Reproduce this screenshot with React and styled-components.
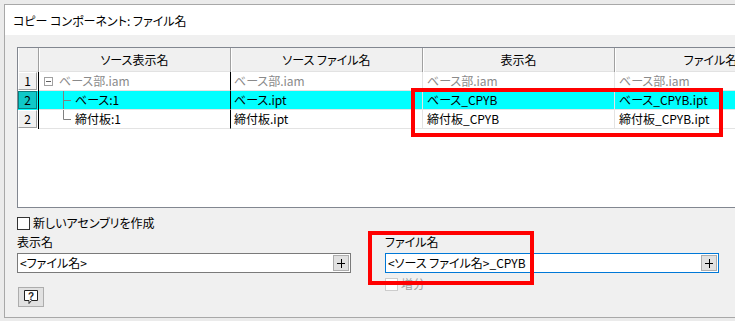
import React from 'react';
import styled, { createGlobalStyle, css } from 'styled-components';

const GlobalStyle = createGlobalStyle`
  html, body { margin: 0; padding: 0; background: #ebebeb; overflow: hidden; }
  body {
    font-family: "Noto Sans CJK JP", "Liberation Sans", sans-serif;
    font-size: 12px;
    color: #000;
    font-feature-settings: "palt";
  }
`;

const Screen = styled.div`
  position: relative;
  width: 735px;
  height: 321px;
  overflow: hidden;
`;

const Dialog = styled.div`
  margin: 4px 0 0 4px;
  width: 820px;
  height: 312px;
  border: 1px solid #a8a8a8;
  border-right: none;
  background: #f0f0f0;
  display: flex;
  flex-direction: column;
`;

const TitleBar = styled.div`
  height: 30px;
  line-height: 31px;
  padding-left: 8px;
  background: #fff;
  font-size: 12px;
`;

const Body = styled.div`
  padding: 12px 0 0 12px;
  display: flex;
  flex-direction: column;
`;

const GridPanel = styled.div`
  width: 800px;
  height: 159px;
  border: 1px solid #828790;
  background: #fff;
`;

const GridRow = styled.div`
  display: grid;
  grid-template-columns: 21px 192px 192px 192px 192px;
  height: ${p => (p.$header ? 24 : 19)}px;
  background: ${p => (p.$selected ? '#00ffff' : 'transparent')};
`;

const HeadCell = styled.div`
  background: #f0f0f0;
  border-right: 1px solid #a0a0a0;
  box-shadow: inset 1px 0 0 #fff, inset 0 -1px 0 #e2e2e2;
  display: flex;
  align-items: center;
  justify-content: center;
  line-height: 24px;
  white-space: nowrap;
  overflow: hidden;
`;

const RowHead = styled.div`
  border-right: 1px solid #000;
  padding: 0 1px 1px 0;
  display: flex;
`;

const RowHeadButton = styled.div`
  flex: 1;
  display: flex;
  align-items: center;
  justify-content: center;
  line-height: 16px;
  ${p =>
    p.$selected
      ? css`
          background: #10c8c8;
          border: 1px solid #0a7d7d;
        `
      : css`
          background: #f0f0f0;
          border: 1px solid;
          border-color: #fff #a0a0a0 #a0a0a0 #fff;
        `}
`;

const Cell = styled.div`
  border-right: 1px solid ${p => (p.$dark ? '#000' : '#e3e3e3')};
  border-bottom: 1px solid #e3e3e3;
  padding-left: ${p => p.$pad || 4}px;
  display: flex;
  align-items: center;
  line-height: 18px;
  white-space: nowrap;
  overflow: hidden;
  color: ${p => (p.$muted ? '#8a8a8a' : '#000')};
`;

const Connector = styled.svg`
  flex: none;
  margin-right: 2px;
`;

const CollapseBox = styled.span`
  width: 7px;
  height: 7px;
  border: 1px solid #a0a0a0;
  position: relative;
  margin-right: 6px;
  flex: none;
  &::after {
    content: '';
    position: absolute;
    left: 1px;
    right: 1px;
    top: 3px;
    height: 1px;
    background: #606060;
  }
`;

const CheckRow = styled.label`
  margin-top: 8px;
  display: flex;
  align-items: center;
  gap: 3px;
  height: 14px;
  line-height: 14px;
  color: ${p => (p.$disabled ? '#a0a0a0' : '#000')};
`;

const Box = styled.span`
  width: 11px;
  height: 11px;
  border: 1px solid ${p => (p.$disabled ? '#cccccc' : '#333')};
  background: #fff;
`;

const Fields = styled.div`
  display: grid;
  grid-template-columns: 334px 334px;
  column-gap: 34px;
  margin-top: 5px;
`;

const Field = styled.div`
  display: flex;
  flex-direction: column;
  align-items: flex-start;
`;

const Label = styled.div`
  line-height: 14px;
  height: 14px;
  margin-bottom: 4px;
`;

const InputBox = styled.div`
  width: 100%;
  box-sizing: border-box;
  height: 20px;
  border: 1px solid ${p => (p.$focused ? '#0078d7' : '#7a7a7a')};
  background: #fff;
  display: flex;
  align-items: center;
  padding: 0 1px 0 2px;
`;

const InputText = styled.span`
  flex: 1;
  line-height: 18px;
  white-space: nowrap;
`;

const PlusButton = styled.div`
  width: 14px;
  height: 14px;
  border: 1px solid #adadad;
  background: #e1e1e1;
  position: relative;
  &::before,
  &::after {
    content: '';
    position: absolute;
    background: #000;
  }
  &::before {
    left: 3px;
    right: 3px;
    top: 7px;
    height: 1px;
  }
  &::after {
    top: 3px;
    bottom: 2px;
    left: 7px;
    width: 1px;
  }
`;

const HelpButton = styled.div`
  margin: 14px 0 0 1px;
  width: 24px;
  height: 18px;
  border: 1px solid #adadad;
  background: #e1e1e1;
  display: flex;
  align-items: center;
  justify-content: center;
`;

const RedBox = styled.div`
  position: absolute;
  box-sizing: border-box;
  border: 4px solid #ff0000;
`;

const TreeLine = ({ last }) => (
  <Connector width="10" height="18" viewBox="0 0 10 18">
    <line x1="0.5" y1="0" x2="0.5" y2={last ? 9.5 : 18} stroke="#808080" />
    <line x1="0.5" y1="9.5" x2="8" y2="9.5" stroke="#808080" />
  </Connector>
);

const HelpIcon = () => (
  <svg width="16" height="16" viewBox="0 0 16 16">
    <path d="M1.5 1.5h13v10h-6l-2.5 3v-3h-4.5z" fill="#fff" stroke="#222" />
    <text x="8" y="10.5" textAnchor="middle" fontSize="10" fontWeight="bold" fontFamily="Liberation Sans, sans-serif" fill="#222">?</text>
  </svg>
);

const rows = [
  { n: '1', tree: 'root', name: 'ベース部.iam', file: 'ベース部.iam', disp: 'ベース部.iam', out: 'ベース部.iam', muted: true },
  { n: '2', tree: 'mid', name: 'ベース:1', file: 'ベース.ipt', disp: 'ベース_CPYB', out: 'ベース_CPYB.ipt', selected: true },
  { n: '2', tree: 'last', name: '締付板:1', file: '締付板.ipt', disp: '締付板_CPYB', out: '締付板_CPYB.ipt' },
];

export default function App() {
  return (
    <Screen>
      <GlobalStyle />
      <Dialog>
        <TitleBar>コピー コンポーネント: ファイル名</TitleBar>
        <Body>
          <GridPanel>
            <GridRow $header>
              <HeadCell />
              <HeadCell>ソース表示名</HeadCell>
              <HeadCell>ソース ファイル名</HeadCell>
              <HeadCell>表示名</HeadCell>
              <HeadCell>ファイル名</HeadCell>
            </GridRow>
            {rows.map((r, i) => (
              <GridRow key={i} $selected={r.selected}>
                <RowHead>
                  <RowHeadButton $selected={r.selected}>{r.n}</RowHeadButton>
                </RowHead>
                <Cell $dark $muted={r.muted} $pad={r.tree === 'root' ? 5 : 24}>
                  {r.tree === 'root' ? <CollapseBox /> : <TreeLine last={r.tree === 'last'} />}
                  {r.name}
                </Cell>
                <Cell $muted={r.muted} $pad={3}>{r.file}</Cell>
                <Cell $muted={r.muted} $pad={4}>{r.disp}</Cell>
                <Cell $muted={r.muted} $pad={4}>{r.out}</Cell>
              </GridRow>
            ))}
          </GridPanel>

          <CheckRow>
            <Box />
            新しいアセンブリを作成
          </CheckRow>

          <Fields>
            <Field>
              <Label>表示名</Label>
              <InputBox>
                <InputText>&lt;ファイル名&gt;</InputText>
                <PlusButton />
              </InputBox>
              <HelpButton>
                <HelpIcon />
              </HelpButton>
            </Field>
            <Field>
              <Label>ファイル名</Label>
              <InputBox $focused>
                <InputText>&lt;ソース ファイル名&gt;_CPYB</InputText>
                <PlusButton />
              </InputBox>
              <CheckRow $disabled style={{ marginTop: 4 }}>
                <Box $disabled />
                増分
              </CheckRow>
            </Field>
          </Fields>
        </Body>
      </Dialog>
      <RedBox style={{ left: 411, top: 88, width: 312, height: 49 }} />
      <RedBox style={{ left: 368, top: 231, width: 166, height: 54 }} />
    </Screen>
  );
}
